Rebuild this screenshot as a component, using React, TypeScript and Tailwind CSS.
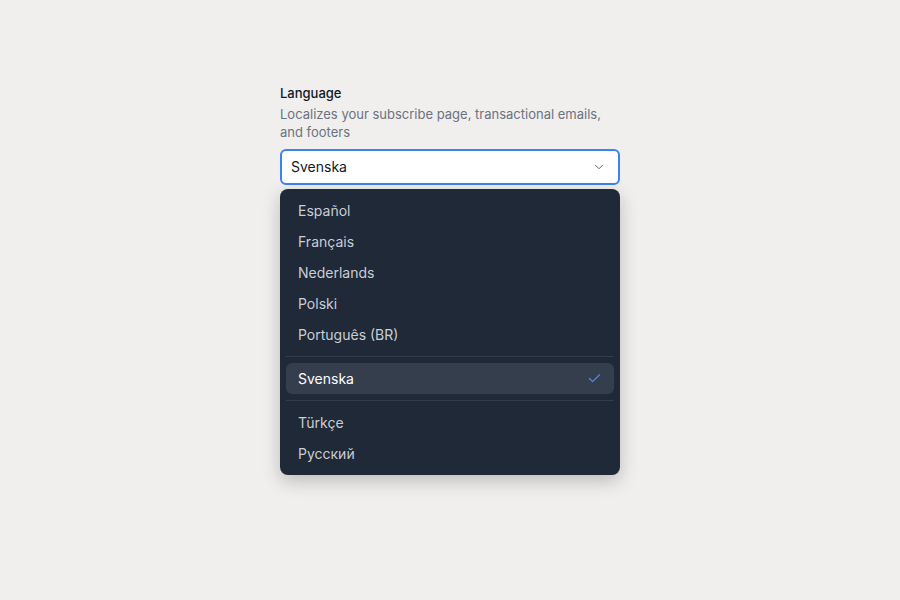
import { Check, ChevronDown } from "lucide-react";

const before = ["Español", "Français", "Nederlands", "Polski", "Português (BR)"];
const after = ["Türkçe", "Русский"];

function Item({ label }: { label: string }) {
  return (
    <div className="flex h-[31px] items-center px-3 text-sm text-[#c9ced6]">
      {label}
    </div>
  );
}

export default function App() {
  return (
    <div
      className="min-h-[600px] w-full bg-[#f0efed] pt-[83px]"
      style={{ fontFamily: "Inter, 'Noto Sans', sans-serif" }}
    >
      <div className="mx-auto w-[340px]">
        <div className="text-[13px] font-medium leading-5 text-[#111827]">Language</div>
        <p className="mt-0.5 text-[13px] leading-[18px] text-[#6b7280]">
          Localizes your subscribe page, transactional emails, and footers
        </p>

        <div className="mt-2 flex h-9 items-center justify-between rounded-md border-2 border-[#3b82f6] bg-white pl-[9px] pr-3 text-sm text-[#111827]">
          <span>Svenska</span>
          <ChevronDown size={14} strokeWidth={1.5} className="text-[#4b5563]" />
        </div>

        <div className="mt-1 rounded-lg bg-[#1f2937] p-1.5 shadow-[0_6px_18px_rgba(0,0,0,0.22)]">
          {before.map((l) => (
            <Item key={l} label={l} />
          ))}
          <div className="my-1.5 h-px bg-[#323c4b]" />
          <div className="flex h-[31px] items-center justify-between rounded-md bg-[#343e4d] px-3 text-sm text-white">
            <span>Svenska</span>
            <Check size={15} strokeWidth={1.75} className="text-[#4f8ef7]" />
          </div>
          <div className="my-1.5 h-px bg-[#323c4b]" />
          {after.map((l) => (
            <Item key={l} label={l} />
          ))}
        </div>
      </div>
    </div>
  );
}
